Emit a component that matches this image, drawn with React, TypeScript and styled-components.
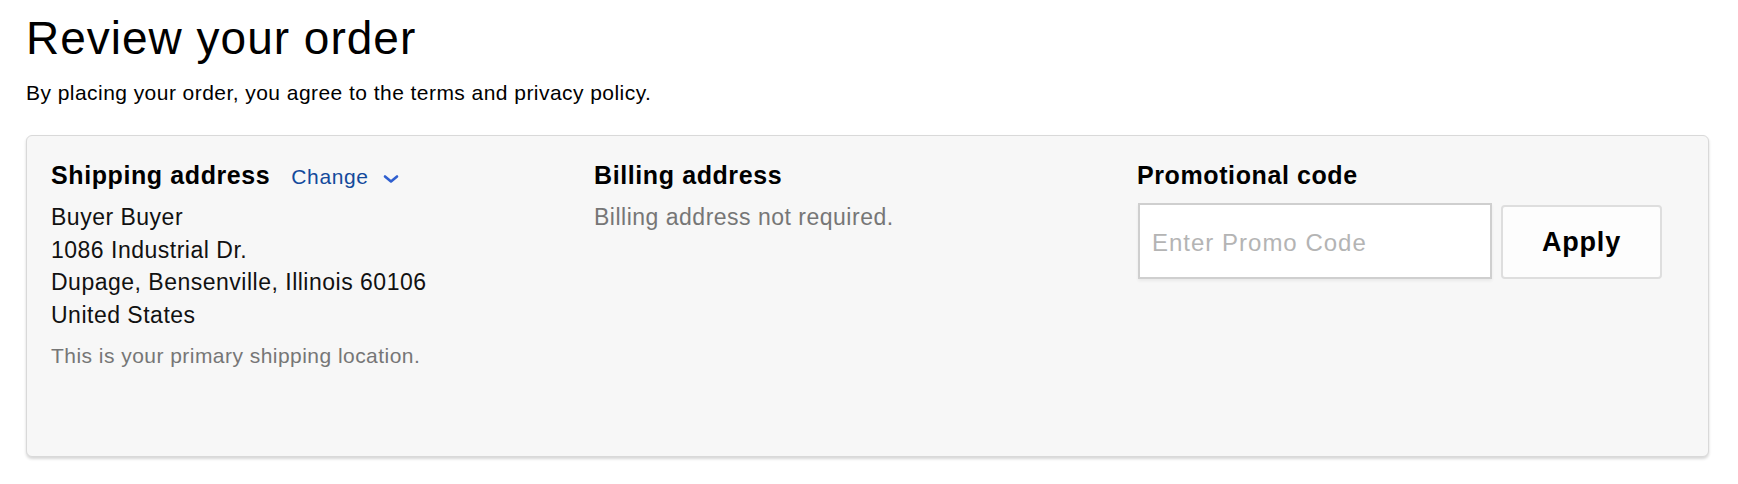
import React from "react";
import styled, { createGlobalStyle } from "styled-components";

const GlobalStyle = createGlobalStyle`
  html, body {
    margin: 0;
    padding: 0;
    background: #ffffff;
  }
  body {
    font-family: "Liberation Sans", Arial, Helvetica, sans-serif;
    color: #111111;
  }
  * { box-sizing: border-box; }
`;

const Page = styled.main`
  padding: 13px 29px 20px 26px;
`;

const Title = styled.h1`
  margin: 0;
  font-size: 46px;
  line-height: 50px;
  font-weight: 400;
  letter-spacing: 1px;
  color: #000000;
`;

const Subtitle = styled.p`
  margin: 18px 0 0;
  font-size: 21px;
  line-height: 24px;
  letter-spacing: 0.45px;
  color: #000000;
`;

const Card = styled.section`
  margin-top: 30px;
  height: 322px;
  background: #f7f7f7;
  border: 1px solid #d9d9d9;
  border-radius: 6px;
  box-shadow: 0 2px 3px rgba(0, 0, 0, 0.16);
  padding: 24px 28px 0 24px;
  display: grid;
  grid-template-columns: repeat(3, 1fr);
  align-items: start;
`;

const Column = styled.div`
  display: flex;
  flex-direction: column;
`;

const HeadingRow = styled.div`
  display: flex;
  align-items: baseline;
  height: 30px;
`;

const Heading = styled.h2`
  margin: 0;
  font-size: 25px;
  line-height: 30px;
  font-weight: 700;
  letter-spacing: 0.6px;
  color: #000000;
`;

const ChangeLink = styled.a`
  margin-left: 21px;
  font-size: 21px;
  line-height: 30px;
  letter-spacing: 0.6px;
  color: #134a9c;
  text-decoration: none;
  display: inline-flex;
  align-items: center;
  cursor: pointer;
`;

const Chevron = styled.svg`
  margin-left: 14px;
  width: 16px;
  height: 10px;
  position: relative;
  top: 2px;
`;

const Lines = styled.div<{ $muted?: boolean }>`
  margin-top: 11px;
  font-size: 23px;
  line-height: 32.5px;
  letter-spacing: 0.5px;
  color: ${(p) => (p.$muted ? "#767676" : "#111111")};
`;

const Note = styled.p`
  margin: 11px 0 0;
  font-size: 21px;
  line-height: 28px;
  letter-spacing: 0.46px;
  color: #767676;
`;

const PromoRow = styled.div`
  margin-top: 13px;
  display: flex;
  align-items: flex-end;
  gap: 9px;
  margin-left: 1px;
`;

const PromoInput = styled.input`
  width: 354px;
  height: 76px;
  border: 2px solid #cfcfcf;
  background: #ffffff;
  padding: 4px 12px 0;
  font-family: "Liberation Sans", Arial, Helvetica, sans-serif;
  font-size: 24px;
  letter-spacing: 1px;
  color: #111111;
  outline: none;
  box-shadow: 0 2px 3px rgba(0, 0, 0, 0.06);
  &::placeholder {
    color: #b4b4b4;
  }
`;

const ApplyButton = styled.button`
  width: 161px;
  height: 74px;
  border: 2px solid #dedede;
  border-radius: 4px;
  background: #fdfdfd;
  font-family: "Liberation Sans", Arial, Helvetica, sans-serif;
  font-size: 27px;
  font-weight: 700;
  letter-spacing: 0.8px;
  color: #000000;
  cursor: pointer;
  padding: 0;
`;

export default function App() {
  return (
    <>
      <GlobalStyle />
      <Page>
        <Title>Review your order</Title>
        <Subtitle>
          By placing your order, you agree to the terms and privacy policy.
        </Subtitle>
        <Card>
          <Column>
            <HeadingRow>
              <Heading>Shipping address</Heading>
              <ChangeLink>
                Change
                <Chevron viewBox="0 0 16 10" aria-hidden="true">
                  <path
                    d="M2 2.5 L8 7.5 L14 2.5"
                    fill="none"
                    stroke="#2f5fcf"
                    strokeWidth="2.6"
                    strokeLinecap="round"
                    strokeLinejoin="round"
                  />
                </Chevron>
              </ChangeLink>
            </HeadingRow>
            <Lines>
              <div>Buyer Buyer</div>
              <div>1086 Industrial Dr.</div>
              <div>Dupage, Bensenville, Illinois 60106</div>
              <div>United States</div>
            </Lines>
            <Note>This is your primary shipping location.</Note>
          </Column>
          <Column>
            <HeadingRow>
              <Heading>Billing address</Heading>
            </HeadingRow>
            <Lines $muted>Billing address not required.</Lines>
          </Column>
          <Column>
            <HeadingRow>
              <Heading>Promotional code</Heading>
            </HeadingRow>
            <PromoRow>
              <PromoInput type="text" placeholder="Enter Promo Code" />
              <ApplyButton type="button">Apply</ApplyButton>
            </PromoRow>
          </Column>
        </Card>
      </Page>
    </>
  );
}
